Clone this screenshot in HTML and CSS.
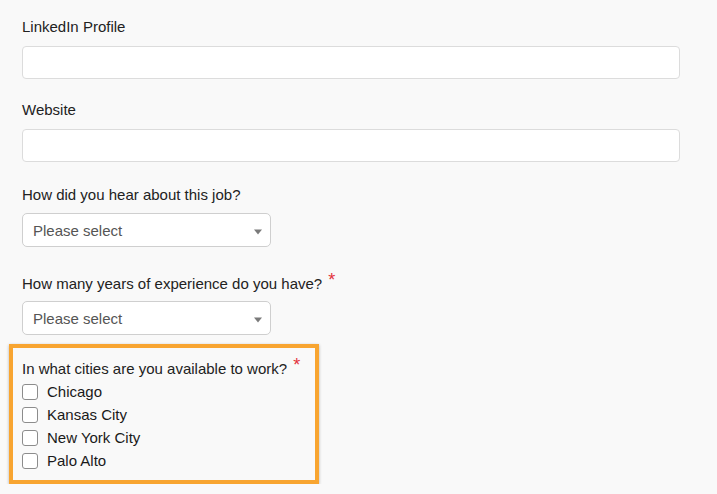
FILE: index.html
```html
<!DOCTYPE html>
<html lang="en">
<head>
<meta charset="utf-8">
<title>Application form</title>
<link rel="stylesheet" href="styles.css">
</head>
<body>
<form class="form">
  <div class="field">
    <label class="label">LinkedIn Profile</label>
    <div class="text-input"></div>
  </div>
  <div class="field">
    <label class="label">Website</label>
    <div class="text-input"></div>
  </div>
  <div class="field field-select">
    <label class="label label-select">How did you hear about this job?</label>
    <div class="select">
      <span class="select-text">Please select</span>
      <svg class="caret" width="8" height="6" viewBox="0 0 8 6"><path d="M0 0.5 L8 0.5 L4 5.5 Z" fill="#7a7a7a"/></svg>
    </div>
  </div>
  <div class="field field-select2">
    <label class="label label-req">How many years of experience do you have?<span class="req">*</span></label>
    <div class="select">
      <span class="select-text">Please select</span>
      <svg class="caret" width="8" height="6" viewBox="0 0 8 6"><path d="M0 0.5 L8 0.5 L4 5.5 Z" fill="#7a7a7a"/></svg>
    </div>
  </div>
  <div class="highlight">
    <div class="label label-box">In what cities are you available to work?<span class="req">*</span></div>
    <label class="check-row"><span class="box"></span>Chicago</label>
    <label class="check-row"><span class="box"></span>Kansas City</label>
    <label class="check-row"><span class="box"></span>New York City</label>
    <label class="check-row"><span class="box"></span>Palo Alto</label>
  </div>
</form>
</body>
</html>
```

FILE: styles.css
```css
html, body {
  margin: 0;
  padding: 0;
  background: #f9f9f9;
}
body {
  font-family: "Liberation Sans", Arial, Helvetica, sans-serif;
  font-size: 15px;
  color: #222;
}
.form {
  padding: 17px 0 0 22px;
  width: 658px;
}
.field {
  margin-bottom: 21px;
}
.field-select {
  margin-top: 23px;
  margin-bottom: 24px;
}
.field-select2 {
  margin-bottom: 9px;
}
.label {
  display: block;
  line-height: 20px;
  height: 20px;
  margin-bottom: 9px;
}
.label-select {
  margin-bottom: 8px;
}
.label-req {
  margin-bottom: 10px;
}
.req {
  color: #e3323c;
  font-size: 18px;
  margin-left: 6px;
  vertical-align: 3px;
  line-height: 1;
}
.text-input {
  box-sizing: border-box;
  height: 33px;
  width: 658px;
  background: #fff;
  border: 1px solid #dcdcdc;
  border-radius: 4px;
}
.select {
  box-sizing: border-box;
  width: 249px;
  height: 34px;
  background: #fff;
  border: 1px solid #cfcfcf;
  border-radius: 5px;
  display: flex;
  align-items: center;
  justify-content: space-between;
  padding: 0 8px 0 10px;
  color: #555;
}
.caret {
  display: block;
  margin-top: 3px;
}
.highlight {
  box-sizing: border-box;
  width: 310px;
  margin-left: -13px;
  border: 4px solid #f8a531;
  box-shadow: 0 1px 3px rgba(0, 0, 0, 0.28);
  padding: 8px 0 8px 9px;
}
.label-box {
  margin-bottom: 4px;
}
.check-row {
  display: flex;
  align-items: center;
  height: 23px;
  color: #1a1a1a;
}
.box {
  box-sizing: border-box;
  width: 16px;
  height: 16px;
  border: 1px solid #8c8c8c;
  border-radius: 3px;
  background: #fff;
  margin-right: 9px;
  flex: none;
}
```
